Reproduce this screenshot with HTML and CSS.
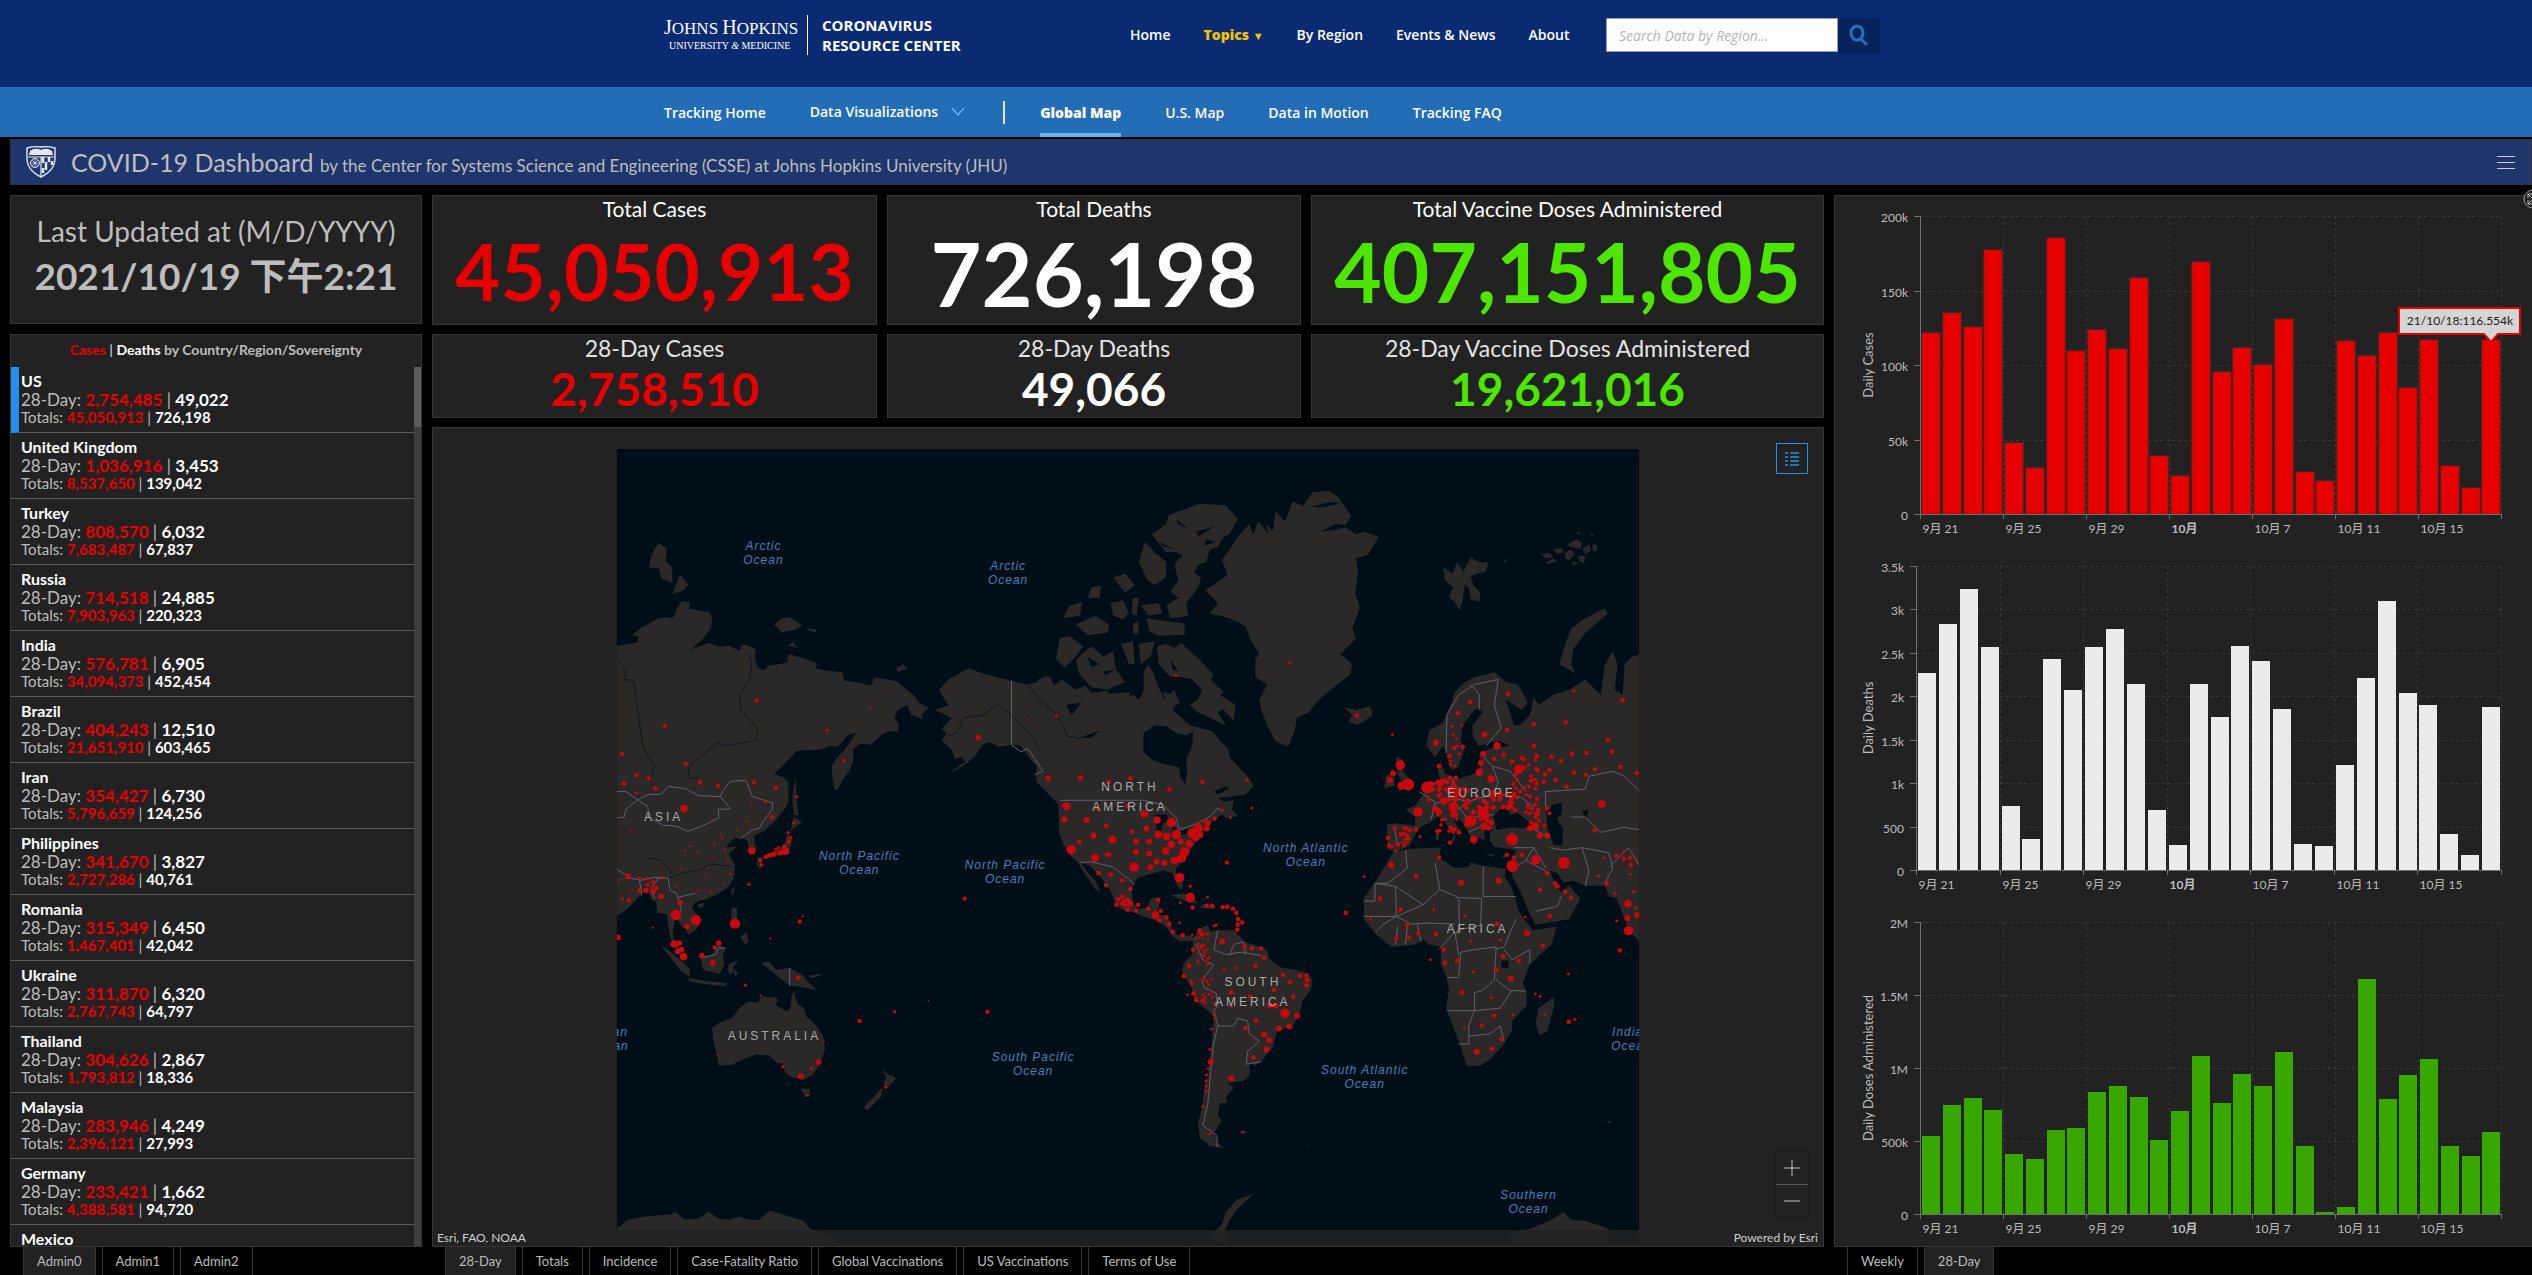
FILE: index.html
```html
<!DOCTYPE html>
<html lang="en">
<head>
<meta charset="utf-8">
<title>COVID-19 Map - Johns Hopkins Coronavirus Resource Center</title>
<link rel="stylesheet" href="styles.css">
</head>
<body>
<header class="site-header">
  <div class="wrap">
    <a class="brand" href="#">
      <span class="jhu"><span class="jhu-name"><b>J</b>OHNS <b>H</b>OPKINS</span><span class="jhu-sub">UNIVERSITY <i>&amp;</i> MEDICINE</span></span>
      <span class="crc">CORONAVIRUS<br>RESOURCE CENTER</span>
    </a>
    <nav class="main-nav">
      <a href="#">Home</a><a class="topics" href="#">Topics <small>▼</small></a><a href="#">By Region</a><a href="#">Events &amp; News</a><a href="#">About</a>
    </nav>
    <form class="search">
      <input type="text" aria-label="Search Data by Region" placeholder="Search Data by Region...">
      <button type="button" aria-label="Search"><svg width="20" height="24" viewBox="0 0 20 24"><ellipse cx="8" cy="9" rx="6" ry="7" fill="none" stroke="#2372ba" stroke-width="3"/><path d="M12 15l6 6" stroke="#2372ba" stroke-width="3"/></svg></button>
    </form>
  </div>
</header>
<div class="sub-header">
  <nav class="wrap sub-nav">
    <a href="#">Tracking Home</a>
    <a class="viz" href="#">Data Visualizations <svg width="14" height="10" viewBox="0 0 14 10"><path d="M1 1l6 7 6-7" fill="none" stroke="#6fb5f5" stroke-width="1.3"/></svg></a>
    <span class="sep"></span>
    <a class="active" href="#">Global Map</a><a href="#">U.S. Map</a><a href="#">Data in Motion</a><a href="#">Tracking FAQ</a>
  </nav>
</div>

<main class="dashboard">
  <div class="title-bar">
    <svg class="shield" width="32" height="34" viewBox="0 0 32 34"><path d="M2 3q7-2 14-1 7-1 14 1v12q-1 11-14 17Q3 26 2 15z" fill="#20386f" stroke="#e4e7ee" stroke-width="1.4"/><path d="M5 6q5-4 11-1 6-3 11 1l1 4H4z" fill="#e4e7ee"/><path d="M3 12h26M16 12v19" stroke="#e4e7ee" stroke-width="1.2"/><circle cx="10" cy="18" r="4.500" fill="none" stroke="#e4e7ee"/><path d="M6 18h8M10 14v8M7 15l6 6M13 15l-6 6" stroke="#e4e7ee" stroke-width=".7"/><path d="M18 12v6M21 17v8M24 12v5M27 16v4M18 23v5" stroke="#e4e7ee" stroke-width="2.500"/></svg>
    <h1>COVID-19 Dashboard <small>by the Center for Systems Science and Engineering (CSSE) at Johns Hopkins University (JHU)</small></h1>
    <button class="menu" type="button" aria-label="Menu"><span></span><span></span><span></span></button>
  </div>
  <div class="columns">
    <section class="col left">
      <div class="panel updated"><p>Last Updated at (M/D/YYYY)</p><p class="date">2021/10/19 下午2:21</p></div>
      <div class="panel list">
        <h2><span class="red">Cases</span> | <span class="white">Deaths</span> by Country/Region/Sovereignty</h2>
        <div class="scroller"><ul id="countries"></ul><div class="track"><div class="thumb"></div></div></div>
      </div>
      <nav class="tabs"><button class="on">Admin0</button><button>Admin1</button><button>Admin2</button></nav>
    </section>

    <section class="col middle">
      <div class="stats totals">
        <div class="panel"><h3>Total Cases</h3><p class="red big">45,050,913</p></div>
        <div class="panel"><h3>Total Deaths</h3><p class="white huge">726,198</p></div>
        <div class="panel"><h3>Total Vaccine Doses Administered</h3><p class="green large">407,151,805</p></div>
      </div>
      <div class="stats recent">
        <div class="panel"><h3>28-Day Cases</h3><p class="red">2,758,510</p></div>
        <div class="panel"><h3>28-Day Deaths</h3><p class="white">49,066</p></div>
        <div class="panel"><h3>28-Day Vaccine Doses Administered</h3><p class="green">19,621,016</p></div>
      </div>
      <div class="panel map">
        <svg class="world" viewBox="433 428 1390 819">
          <defs><clipPath id="frame"><path d="M616 449h1024v798H616z"/></clipPath></defs>
          <g clip-path="url(#frame)">
            <path class="sea" d="M616 449h1024v800H616z"/>
            <g class="land" transform="translate(600 440) scale(.338 .5102)">
              <path d="M40 405L108 398 112 385 92 384 120 368 150 358 170 350 190 348 214 350 226 330 240 316 264 318 262 330 300 336 322 338 330 350 328 368 300 392 268 411 320 398 350 406 380 404 412 414 418 402 440 404 460 412 456 430 466 448 484 452 500 442 530 440 552 436 556 420 600 428 640 438 636 448 660 452 716 456 722 472 762 476 800 482 812 466 850 470 880 474 910 492 930 502 940 514 972 526 950 540 955 547 920 540 908 520 880 530 870 545 884 560 880 572 850 572 830 580 800 598 770 596 748 606 748 632 738 648 720 664 704 684 694 688 686 660 684 640 700 624 720 610 740 592 756 574 730 580 716 592 700 602 680 600 650 608 582 610 550 632 514 656 540 662 556 672 556 712 540 728 516 748 490 764 478 770 456 776 456 790 462 800 450 812 438 808 436 790 426 782 412 784 400 780 384 788 370 800 404 798 380 812 398 834 396 856 380 876 350 890 330 896 312 902 290 904 276 910 270 918 290 936 296 948 280 962 260 972 252 960 240 956 232 944 220 940 214 964 216 980 224 985 236 1000 240 1010 228 1006 216 990 206 975 202 960 196 930 188 930 168 928 164 906 150 902 140 884 120 890 108 900 80 920 40 937z"/>
              <path d="M150 225L170 202 196 212 194 238 212 250 212 280 180 272 172 252 142 250zM212 302L236 264 260 284 244 296zM515 362L535 350 560 348 598 364 578 372 536 378zM606 370L640 372 636 378zM556 404L570 396 582 408zM876 448L896 440 908 448 880 456z"/>
              <path d="M576 660L580 700 586 738 572 735 568 705zM562 770L572 740 598 750 570 762zM556 768L566 788 556 812 530 815 504 820 488 820 470 822 500 810 520 808 545 790zM464 824L480 824 480 834 472 842 462 834zM386 890L390 878 398 880 390 894zM286 912L306 908 304 916 292 918z"/>
              <path d="M388 918L404 918 404 940 414 952 398 954 386 944zM414 975L432 965 438 985 428 990zM176 990L210 1006 246 1026 264 1038 264 1054 240 1044 210 1018zM260 1056L320 1062 372 1066 372 1072 310 1068 262 1062zM296 1016L330 1010 344 990 372 996 362 1012 366 1030 352 1048 304 1040zM380 1028L410 1020 390 1036 408 1046 400 1052 390 1042 384 1052 376 1040zM474 1026L500 1024 520 1040 560 1036 600 1050 612 1062 642 1080 600 1074 560 1070 520 1050zM610 1052L650 1048 654 1050 630 1056z"/>
              <path d="M330 1154L350 1144 390 1134 412 1114 436 1102 466 1104 476 1092 524 1094 520 1110 554 1122 562 1112 566 1088 572 1084 584 1108 600 1112 610 1132 634 1146 660 1170 664 1196 652 1222 628 1246 600 1256 564 1250 546 1240 540 1224 522 1222 500 1208 460 1206 420 1216 390 1226 350 1228 346 1210 334 1180zM592 1272L620 1274 620 1288 606 1290zM834 1232L850 1244 876 1252 848 1272 838 1264 846 1252zM836 1270L830 1290 790 1316 778 1310 810 1288z"/>
              <path d="M1003 490L1030 470 1070 455 1090 448 1130 458 1200 470 1260 480 1290 476 1320 462 1340 480 1400 490 1450 500 1568 495 1568 700 1380 712 1360 706 1340 690 1322 684 1300 665 1290 640 1260 615 1245 600 1220 598 1180 602 1150 592 1130 600 1110 620 1090 632 1060 645 1020 658 980 671 1030 655 1060 640 1080 632 1070 622 1050 625 1040 608 1010 590 1025 575 1010 568 1040 545 990 530 1030 520 1010 500z"/>
              <path d="M48 1548L80 1530 130 1524 210 1520 220 1514 250 1530 290 1528 320 1514 350 1528 380 1530 410 1524 440 1530 470 1530 500 1512 540 1520 600 1532 620 1548 680 1560 720 1580 48 1580z"/>
            </g>
            <g class="land" transform="translate(1040 440) scale(.3954 .5102)">
              <path d="M-5 470L25 464 35 482 55 470 90 490 115 482 130 496 170 492 180 506 210 508 235 500 250 510 262 492 262 455 275 440 285 455 300 485 315 510 340 490 350 515 335 530 380 560 430 570 438 572 455 590 476 606 480 622 500 640 530 665 540 680 520 695 480 700 450 702 465 710 490 706 486 725 500 738 470 742 462 735 440 745 430 755 415 770 400 785 385 800 370 820 345 840 343 850 362 870 358 884 345 872 335 850 310 845 280 852 250 858 238 868 232 885 235 905 245 920 270 918 280 900 305 897 300 920 292 932 320 932 332 952 336 965 355 974 385 972 392 984 378 982 355 984 336 975 320 956 300 945 272 938 240 928 215 924 190 912 185 895 170 875 150 855 125 835 105 830 122 850 140 865 154 887 138 880 110 848 95 828 75 815 60 795 48 770 48 740 46 715 30 702 -10 670z"/>
              <path d="M40 430L50 388 75 385 100 400 110 405 85 430 62 447zM90 432L120 410 130 405 160 425 185 415 192 450 215 475 170 490 130 485 100 460zM205 400L235 395 240 440 225 440zM250 400L290 395 280 425 255 440zM58 350L75 325 108 318 100 345zM90 362L140 345 175 362 172 378 120 383zM120 310L130 290 155 285 150 310zM185 270L215 262 240 285 215 300zM178 320L210 315 225 340 210 352 185 345zM235 310L250 310 245 345 232 340zM235 360L250 355 248 382 235 380zM270 350L320 355 366 360 366 382 300 384 276 375zM255 325L300 320 310 340 275 345z"/>
              <path d="M250 240L265 200 290 220 320 240 318 270 290 285 272 275zM283 185L320 165 325 148 350 140 372 135 400 125 470 128 500 155 480 185 465 190 450 210 430 215 420 240 400 245 390 260 408 270 400 290 370 320 375 345 330 350 320 325 350 310 330 298 350 275 340 245 360 225 318 220z"/>
              <path d="M296 405L320 400 340 408 358 398 380 415 400 428 420 445 440 460 432 470 465 495 455 500 495 520 490 550 462 528 450 535 470 560 430 545 400 535 380 520 400 510 410 490 385 470 360 465 330 465 300 440zM310 495L340 500 355 515 330 525z"/>
              <path d="M500 190L530 165 540 185 552 160 580 185 570 165 590 178 596 140 620 160 640 120 665 130 690 102 730 100 755 112 788 150 770 170 800 185 820 180 858 190 830 225 800 232 805 260 798 300 810 330 790 370 800 390 760 420 790 440 785 460 720 500 700 515 680 535 650 545 645 570 628 602 595 590 575 560 560 530 555 510 575 480 545 465 545 430 555 420 535 395 520 365 480 350 430 340 450 320 418 295 475 265 460 235 480 215z"/>
              <path d="M770 525L800 530 835 522 842 540 805 560 780 552 790 540zM1020 250L1045 262 1055 240 1072 258 1090 230 1112 240 1135 240 1128 258 1108 262 1090 268 1098 285 1115 300 1112 318 1090 312 1085 290 1075 285 1070 315 1062 335 1050 318 1035 308 1045 290 1025 275zM1315 440L1330 400 1345 370 1380 350 1430 330 1438 340 1380 380 1350 410 1345 440 1355 458z"/>
              <path d="M1268 223L1290 222 1300 230 1280 232zM1282 240L1300 232 1308 238 1285 244zM1302 215L1320 212 1325 220 1308 224zM1328 222L1345 215 1355 224 1340 236 1330 232zM1335 205L1360 195 1372 202 1368 214 1345 210zM1356 182L1368 180 1366 186zM1374 212L1392 205 1395 218 1380 224zM1398 204L1410 206 1408 220 1400 216zM1362 226L1380 228 1378 242 1366 238zM1348 238L1364 242 1350 246zM1390 184L1400 184 1400 190zM1172 236L1182 234 1178 242zM1436 1336L1450 1338 1438 1342zM672 1382L680 1386 678 1388z"/>
              <path d="M388 978L405 958 425 952 430 965 450 962 490 962 520 985 575 1000 580 1018 610 1035 650 1040 680 1048 690 1060 685 1080 665 1100 655 1130 640 1150 600 1160 590 1190 560 1220 545 1228 530 1222 532 1245 515 1258 475 1262 490 1272 470 1290 475 1300 455 1302 450 1325 460 1335 440 1360 448 1376 465 1390 430 1385 405 1370 400 1340 410 1310 416 1270 425 1250 435 1180 440 1130 400 1105 380 1070 360 1045 362 1028 385 1010zM330 893L365 890 402 908 378 908zM405 918L412 910 445 915 440 920zM505 1358L524 1356 520 1362z"/>
              <path d="M895 808L940 802 1015 800 1010 820 1050 840 1085 838 1090 828 1110 834 1180 842 1176 855 1195 880 1210 920 1225 940 1248 962 1308 955 1295 990 1265 1010 1240 1030 1222 1065 1232 1085 1232 1110 1195 1140 1195 1160 1170 1190 1140 1215 1115 1228 1080 1228 1065 1190 1045 1150 1028 1115 1035 1080 1030 1055 1015 1030 1015 995 985 990 970 980 950 990 890 995 850 970 820 940 820 900 850 865 870 840zM1300 1093L1302 1108 1285 1160 1265 1168 1255 1145 1262 1115z"/>
              <path d="M878 755L900 752 950 757 950 740 925 725 950 718 960 705 978 690 1000 672 1012 665 1005 640 1015 632 1025 655 1060 665 1100 655 1115 640 1112 615 1140 605 1190 600 1160 590 1110 600 1095 580 1095 560 1120 535 1112 525 1100 530 1070 560 1065 590 1075 605 1060 640 1045 648 1035 640 1030 615 1020 600 1000 622 978 600 985 570 1020 555 1040 520 1050 495 1075 475 1100 465 1130 460 1150 455 1180 475 1210 480 1235 515 1220 530 1180 510 1200 560 1215 560 1240 540 1250 505 1262 520 1300 500 1340 490 1380 470 1420 500 1430 440 1450 415 1462 440 1455 490 1475 500 1480 440 1500 425 1520 420 1520 985 1500 970 1490 965 1480 940 1460 900 1440 895 1430 875 1380 875 1350 865 1325 868 1310 850 1290 845 1310 880 1322 888 1340 875 1368 900 1340 940 1255 952 1240 930 1215 885 1195 855 1198 820 1205 805 1180 802 1150 798 1138 785 1140 768 1150 765 1190 760 1165 765 1125 765 1125 785 1110 780 1100 797 1088 775 1068 748 1048 735 1042 728 1050 750 1072 775 1052 768 1050 785 1035 795 1048 775 1020 745 1005 738 990 750 965 758 945 780 935 797 900 808 880 803zM902 620L920 628 918 650 930 660 945 680 905 690 918 672 905 655zM875 660L895 650 898 678 872 684zM1002 765L1012 765 1010 785 1002 785zM1125 812L1150 814 1145 818zM1168 818L1182 812 1178 820z"/>
              <path d="M1240 1548L1290 1532 1325 1515 1345 1530 1380 1532 1440 1548 1440 1580 1190 1580 1195 1555zM420 1568L460 1540 470 1515 500 1490 540 1480 500 1508 480 1530 468 1550 480 1580z"/>
              <g class="water"><path d="M262 575L290 560 320 562 345 575 370 580 388 572 385 600 370 625 372 655 368 676 355 662 352 642 310 635 285 628 262 612zM1148 738L1170 720 1185 728 1192 736 1208 732 1225 742 1252 758 1220 762 1195 760 1155 765zM1282 730L1300 715 1322 712 1320 735 1308 742 1325 765 1322 795 1300 795 1285 762zM1168 1022H1186V1036H1168zM290 735L320 735 330 750 310 752 305 780 298 780zM335 752L350 770 375 762 372 772 335 780zM440 690L470 680 480 684 450 695zM100 585L150 570 130 585zM65 520L105 515 80 540zM1372 730L1388 725 1384 745z"/>
              <path d="M285 222L345 220 360 232 330 232zM300 200L345 215 310 208zM395 180L440 170 400 190zM345 155L375 175 350 165zM420 195L445 200 415 208zM710 180L750 165 790 168 750 176zM685 132L730 122 760 124 720 132zM120 425L150 440 130 445zM160 455L190 450 165 462zM330 430L350 455 335 450z"/></g>
            </g>
            <g class="rivers" transform="translate(600 440) scale(.338 .5102)"><path d="M50 430L75 455 72 470 98 472 112 540 125 600 160 640 145 670 165 685M440 420L448 440 440 470 412 500 415 530 466 565 460 590 370 600 345 595 270 635 258 650 265 664 290 662M1030 580L1055 575 1075 545 1130 540 1178 518 1215 540 1240 555 1280 580 1300 610M1265 480L1300 510 1345 535 1370 560 1380 580 1420 586M200 860L240 850 290 845 330 832 395 838M140 820L180 825 210 850"/></g>
            <g class="borders" transform="translate(600 440) scale(.338 .5102)"><path d="M47 690L75 690 110 706 140 696 180 695 200 680 250 684 290 698 355 700 360 690 384 670 430 668 450 700 510 712 508 725 480 750 470 762 450 765 418 780M110 706L140 720 142 740 185 756 225 758 258 768 300 758 350 742 348 725 384 724 355 700M110 706L75 725 70 740 47 742M47 842L90 860 120 864 160 858 190 860M115 862L122 896M160 900L150 880 170 860 200 860 206 884 225 890 240 920 226 935M225 898L280 890M300 1016L340 1010 350 996 368 998M560 1036V1072M1217 472V598L1245 612 1265 605 1300 640 1310 650 1285 657"/></g>
            <g class="borders" transform="translate(1040 440) scale(.3954 .5102)"><path d="M50 707H260L310 715 345 742 352 765 400 752 432 738 450 722 462 730M100 829L130 828 185 838 240 872M450 962L440 1000 470 1010 510 1005 560 1012M395 990L412 1020 440 1030 410 1060 415 1075 445 1085 450 1110 440 1120 450 1150 490 1150 500 1135 525 1140 530 1165 555 1180 525 1200 522 1225 560 1220M450 1150L438 1190 432 1240 425 1300 412 1345 448 1365 448 1388M480 1012L490 990 515 985 520 1010M820 905H848V870H880L930 840 925 805M848 870L900 876 970 912 1012 882 1000 830M1012 882L1060 898 1062 958 1050 970 1070 960 1115 952 1118 900 1062 898M1122 838V896H1205M900 876L902 935H820M902 935L870 950 850 965M902 935L970 912M902 935L940 950 980 948 1050 950M1030 1055L1060 1055 1065 1005 1100 1000 1155 995 1150 1060 1120 1080 1100 1085 1100 1120 1030 1120M1150 1000L1175 995 1205 940M1175 1000L1195 1020 1240 1000 1240 1028M1155 1060L1190 1080 1230 1082M1195 1080L1165 1115 1100 1120 1085 1150 1086 1185 1060 1185M1086 1170L1140 1165 1165 1150 1175 1180M900 990L905 955M925 990L930 955M965 985L955 950M1010 1000L1050 965 1060 1010M1200 840L1230 825 1250 800 1200 800M1230 825L1290 850M1255 925L1310 915 1320 895M1250 800L1280 840M1290 800L1325 805 1372 800 1390 845 1380 875M1372 800L1440 810 1450 840 1430 870M1280 725L1280 690 1380 685 1390 660 1450 650 1480 660 1520 690M1346 740H1380L1420 770 1480 760 1517 765M1440 840L1490 800 1517 835M1028 615L1030 540 1060 500 1100 480 1160 470 1150 520 1168 565 1130 600M1090 480L1112 500 1112 530M1045 665L1040 700 1080 710 1150 695 1215 700 1250 720M960 690L1000 710 990 745M1000 715L1040 700M1080 710L1060 725 1040 720M1100 740L1150 735M1085 770L1125 755M1115 615L1145 640 1160 670 1150 695M1145 640L1190 650 1230 690M905 795L898 765M1240 760L1290 780M1040 700L1075 735 1090 760"/></g>
            <g id="dots"></g>
            <g class="oceans">
              <text x="763" y="550">Arctic<tspan x="763" dy="14">Ocean</tspan></text>
              <text x="1008" y="570">Arctic<tspan x="1008" dy="14">Ocean</tspan></text>
              <text x="859" y="861">North Pacific<tspan x="859" dy="14">Ocean</tspan></text>
              <text x="1005" y="870">North Pacific<tspan x="1005" dy="14">Ocean</tspan></text>
              <text x="1033" y="1062">South Pacific<tspan x="1033" dy="14">Ocean</tspan></text>
              <text x="608" y="1037">Indian<tspan x="608" dy="14">Ocean</tspan></text>
              <text x="1306" y="853">North Atlantic<tspan x="1306" dy="14">Ocean</tspan></text>
              <text x="1365" y="1075">South Atlantic<tspan x="1365" dy="14">Ocean</tspan></text>
              <text x="1632" y="1037">Indian<tspan x="1632" dy="14">Ocean</tspan></text>
              <text x="1529" y="1200">Southern<tspan x="1529" dy="14">Ocean</tspan></text>
            </g>
            <g class="continents">
              <text x="663" y="821">ASIA</text><text x="774" y="1041">AUSTRALIA</text>
              <text x="1130" y="791">NORTH<tspan x="1130" dy="20">AMERICA</tspan></text>
              <text x="1253" y="987">SOUTH<tspan x="1253" dy="20">AMERICA</tspan></text>
              <text x="1482" y="797">EUROPE</text><text x="1478" y="934">AFRICA</text>
            </g>
          </g>
        </svg>
        <button class="legend" type="button" aria-label="Legend"><svg width="16" height="18" viewBox="0 0 16 18"><path d="M6 3h9M6 7h9M6 11h9M6 15h9M1 3h3M1 7h3M1 11h3M1 15h3" stroke="#2490eb" stroke-width="1.500"/></svg></button>
        <div class="zoom">
          <button type="button" aria-label="Zoom in"><svg width="16" height="16" viewBox="0 0 16 16"><path d="M0 8h16M8 0v16" stroke="#c8c8c8"/></svg></button>
          <button type="button" aria-label="Zoom out"><svg width="16" height="16" viewBox="0 0 16 16"><path d="M0 8h16" stroke="#c8c8c8"/></svg></button>
        </div>
        <div class="credits"><span>Esri, FAO, NOAA</span><span>Powered by Esri</span></div>
      </div>
      <nav class="tabs"><button class="on">28-Day</button><button>Totals</button><button>Incidence</button><button>Case-Fatality Ratio</button><button>Global Vaccinations</button><button>US Vaccinations</button><button>Terms of Use</button></nav>
    </section>

    <section class="col right">
      <div class="panel charts" id="charts"></div>
      <nav class="tabs"><button>Weekly</button><button class="on">28-Day</button></nav>
      <svg class="expand" width="20" height="20" viewBox="0 0 20 20"><circle cx="10" cy="10" r="9" fill="#222" stroke="#999"/><path d="M5 9V5h4M5 5l4 4M5 11v4h4M5 15l4-4" fill="none" stroke="#bbb"/></svg>
    </section>
  </div>
</main>
<script src="script.js"></script>
</body>
</html>
```
FILE: styles.css
```css
* { box-sizing: border-box; }
body { margin: 0; height: 100vh; display: flex; flex-direction: column; overflow: hidden; background: #000; color: #bdbdbd; font-family: Lato, "Noto Sans CJK SC", sans-serif; }
a { color: #fff; text-decoration: none; }
h1, h2, h3, p, ul { margin: 0; padding: 0; font-weight: 400; }
button { border: 0; padding: 0; background: none; color: inherit; font: inherit; }
svg { display: block; }

.red { color: #e60000; }
.white { color: #fff; }
.green { color: #4ce600; }

/* Site header */
.site-header { flex: none; height: 87px; background: #0a2b72; }
.wrap { display: flex; width: 100%; max-width: 1228px; margin: 0 auto; padding-left: 12px; font-family: "Open Sans", sans-serif; font-size: 15px; font-weight: 600; }
.brand { display: flex; width: 466px; padding-top: 15px; }
.jhu { display: flex; flex-direction: column; width: 144px; height: 40px; padding-top: 3px; border-right: 1px solid #fff; font-family: "Liberation Serif", serif; font-weight: 400; line-height: 18px; }
.jhu-name { font-size: 17px; }
.jhu-name b { font-size: 20px; font-weight: 400; }
.jhu-sub { padding: 1px 0 0 5px; font-size: 10px; line-height: 14px; }
.crc { padding-left: 14px; font-size: 15px; font-weight: 700; line-height: 20px; }
.main-nav { display: flex; gap: 33px; width: 476px; padding-top: 24px; line-height: 22px; white-space: nowrap; font-size: 14px; }
.main-nav .topics { color: #f1c400; font-weight: 800; }
.main-nav small { font-size: 11px; }
.search { display: flex; align-items: flex-start; padding-top: 18px; }
.search input { width: 232px; height: 34px; padding: 0 12px; border: 1px solid #999; border-radius: 0; background: #fff; font: italic 14px "Open Sans", sans-serif; }
.search input::placeholder { color: #b5b5b5; }
.search button { display: grid; place-items: center; width: 42px; height: 36px; background: #06225b; }
.sub-header { flex: none; height: 50px; background: #226db6; }
.sub-nav { gap: 44px; height: 50px; line-height: 52px; font-size: 14px; }
.sub-nav .viz { display: flex; align-items: center; gap: 13px; margin-right: -6px; }
.sub-nav .sep { width: 2px; height: 23px; margin: 14px -9px 0 0; background: #dce8f4; }
.sub-nav .active { border-bottom: 4px solid #69b3f7; font-weight: 800; }

/* Dashboard frame */
.dashboard { flex: 1; display: flex; flex-direction: column; gap: 10px; min-height: 0; padding: 2px 0 0 10px; }
.title-bar { flex: none; display: flex; align-items: center; height: 46px; padding: 0 16px 0 14px; background: #1e366c; border: 1px solid #333; }
.title-bar h1 { flex: 1; padding-left: 14px; font-size: 25px; }
.title-bar small { font-size: 17px; }
.menu { display: grid; gap: 5px; }
.menu span { width: 18px; height: 1px; background: #ccc; }
.columns { flex: 1; display: grid; grid-template-columns: 412fr 1392fr 698fr; gap: 10px; min-height: 0; }
.col { display: flex; flex-direction: column; gap: 10px; min-width: 0; min-height: 0; position: relative; }
.panel { background: #222; border: 1px solid #363636; }
.tabs { flex: none; display: flex; gap: 6px; height: 28px; margin-top: -10px; padding-left: 13px; font-size: 13px; }
.tabs button { padding: 0 13px; border: solid #363636; border-width: 0 1px; white-space: nowrap; }
.tabs .on { background: #222; }

/* Left column */
.updated { flex: none; height: 129px; padding-top: 16px; font-size: 28px; line-height: 38px; text-align: center; }
.updated .date { padding-top: 4px; font-size: 37px; font-weight: 700; line-height: 44px; white-space: nowrap; }
.list { flex: 1; display: flex; flex-direction: column; min-height: 0; }
.list h2 { flex: none; height: 32px; font-size: 14px; font-weight: 700; line-height: 30px; text-align: center; }
.scroller { flex: 1; display: flex; min-height: 0; overflow: hidden; }
.scroller ul { flex: 1; list-style: none; }
.scroller li { height: 66px; padding: 4px 0 0 10px; border-bottom: 1px solid #5a5a5a; color: #fff; font-size: 16px; line-height: 19px; }
.scroller li:first-child { padding-left: 2px; border-left: 8px solid #2490eb; }
.scroller p { color: #bdbdbd; font-size: 17px; }
.scroller p.total { font-size: 15px; line-height: 17px; }
.track { width: 7px; background: #3e3e3e; }
.thumb { height: 60px; background: #5c5c5c; }

/* Middle column */
.stats { flex: none; display: grid; grid-template-columns: 445fr 414fr 513fr; gap: 10px; height: 129px; text-align: center; }
.stats h3 { color: #fff; font-size: 21px; line-height: 26px; }
.stats .big { font-size: 78px; font-weight: 700; line-height: 98px; }
.stats .huge { font-size: 88px; font-weight: 700; line-height: 102px; }
.stats .large { font-size: 82px; font-weight: 700; line-height: 98px; }
.recent { height: 83px; }
.recent h3 { color: #e4e4e4; font-size: 23px; }
.recent p { font-size: 46px; font-weight: 700; line-height: 56px; }
.map { flex: 1; min-height: 0; position: relative; overflow: hidden; }
.world { width: 100%; height: 100%; }
.sea, .water { fill: #000e18; }
.land { fill: #2a2928; }
.borders, .rivers { fill: none; stroke: #665d70; stroke-width: 1; }
.borders path, .rivers path { vector-effect: non-scaling-stroke; }
.rivers { stroke: #0d1620; }
.world .dot { fill: #c8080c; }
.oceans { fill: #4a80b8; font: italic 12px "Liberation Sans", sans-serif; letter-spacing: 1px; text-anchor: middle; }
.continents { fill: #aaa; font: 12px "Liberation Sans", sans-serif; letter-spacing: 3px; text-anchor: middle; }
.legend { position: absolute; top: 15px; right: 15px; display: grid; place-items: center; width: 32px; height: 31px; border: 1px solid #2490eb; }
.zoom { position: absolute; right: 15px; bottom: 30px; width: 32px; box-shadow: 0 0 3px #111; }
.zoom button { display: grid; place-items: center; width: 32px; height: 32px; }
.zoom button + button { border-top: 1px solid #555; }
.credits { position: absolute; inset: auto 0 0; display: flex; justify-content: space-between; padding: 0 5px 0 4px; background: rgba(34, 34, 34, .85); color: #d0d0d0; font-size: 12px; line-height: 16px; }

/* Right column */
.charts { flex: 1; min-height: 0; border-right: 0; overflow: hidden; }
.charts svg { width: 100%; }
.charts text { fill: #bdbdbd; font-size: 12px; }
.charts .axis-name { font-size: 13px; text-anchor: middle; }
.charts .value { text-anchor: end; }
.charts .month { font-weight: 700; }
.charts .grid { stroke: #393939; stroke-dasharray: 3 3; }
.charts .axis { stroke: #707070; fill: none; }
.charts .tip { fill: #222; font-size: 12px; text-anchor: middle; }
.expand { position: absolute; top: -6px; right: -11px; }
```
FILE: script.js
```js
const countries = [
  ["US", "2,754,485", "49,022", "45,050,913", "726,198"],
  ["United Kingdom", "1,036,916", "3,453", "8,537,650", "139,042"],
  ["Turkey", "808,570", "6,032", "7,683,487", "67,837"],
  ["Russia", "714,518", "24,885", "7,903,963", "220,323"],
  ["India", "576,781", "6,905", "34,094,373", "452,454"],
  ["Brazil", "404,243", "12,510", "21,651,910", "603,465"],
  ["Iran", "354,427", "6,730", "5,796,659", "124,256"],
  ["Philippines", "341,670", "3,827", "2,727,286", "40,761"],
  ["Romania", "315,349", "6,450", "1,467,401", "42,042"],
  ["Ukraine", "311,870", "6,320", "2,767,743", "64,797"],
  ["Thailand", "304,626", "2,867", "1,793,812", "18,336"],
  ["Malaysia", "283,946", "4,249", "2,396,121", "27,993"],
  ["Germany", "233,421", "1,662", "4,388,581", "94,720"],
  ["Mexico"]
];
document.getElementById("countries").innerHTML = countries.map(([name, c, d, tc, td]) =>
  `<li><b>${name}</b>` + (c ? `<p>28-Day: <b class="red">${c}</b> | <b class="white">${d}</b></p>
  <p class="total">Totals: <b class="red">${tc}</b> | <b class="white">${td}</b></p>` : "") + "</li>").join("");

// Case markers: two map sheets, each a list of [radius, x, y, x, y, ...]
const sheets = [
  { x: 600, sx: .338, groups: [
    [5.2, 223, 932, 398, 949, 282, 942],
    [3.8, 247, 723, 448, 806, 1394, 804, 1380, 719, 1516, 784, 1465, 820, 246, 1014, 218, 989, 547, 807],
    [2.8, 1119, 584, 134, 884, 156, 886, 179, 896, 81, 857, 235, 908, 256, 955, 228, 1004, 233, 987, 240, 1000, 350, 987, 300, 1012, 332, 1026, 593, 1249, 646, 1221, 512, 813, 532, 810, 1374, 744, 1439, 746, 1460, 776, 52, 976, 1421, 663, 1326, 664],
    [2.2, 190, 561, 252, 635, 294, 672, 454, 672, 519, 682, 507, 740, 347, 678, 63, 616, 69, 674, 107, 658, 143, 664, 162, 684, 462, 512, 114, 884, 140, 873, 155, 868, 165, 878, 84, 904, 500, 815, 490, 818, 472, 824, 545, 798, 558, 788, 1078, 900, 767, 1140, 1146, 1122, 590, 945, 584, 1055, 1418, 788, 1498, 757, 1507, 814, 338, 996],
    [1.6, 670, 570, 720, 629, 489, 710, 572, 751, 581, 700, 439, 872, 64, 900, 871, 1122, 625, 1234, 540, 1230, 429, 1070, 844, 1270, 1350, 541, 555, 770, 564, 780, 526, 800, 519, 804, 477, 834, 105, 692, 115, 860, 136, 860, 184, 858],
    [1.1, 800, 525, 433, 749, 404, 766, 448, 716, 354, 774, 360, 782, 338, 792, 368, 802, 377, 826, 383, 852, 365, 870, 326, 886, 288, 884, 312, 860, 238, 842, 318, 840, 330, 820, 288, 810, 264, 797, 249, 806, 333, 745, 90, 769, 226, 877, 155, 957, 503, 978, 599, 935, 347, 1208, 661, 1180, 613, 1286, 474, 1090, 971, 1101, 1264, 549, 93, 884, 52, 864]
  ] },
  { x: 1040, sx: .3954, groups: [
    [6, 1195, 784, 1122, 732, 1090, 748, 1196, 836, 1326, 830, 932, 676, 980, 682],
    [4.8, 79, 804, 238, 838, 385, 772, 400, 762, 353, 859, 345, 774, 366, 808, 358, 820, 332, 751, 1212, 646, 1490, 963, 380, 898, 1046, 720, 957, 730, 620, 1125, 1255, 824, 912, 638],
    [3.8, 66, 719, 264, 734, 296, 746, 183, 784, 140, 820, 300, 774, 320, 778, 318, 806, 332, 794, 340, 826, 378, 792, 292, 932, 1157, 600, 1112, 652, 1142, 665, 1422, 714, 1488, 910, 1098, 784, 1124, 758, 1022, 708, 1048, 734, 914, 678, 1254, 758, 394, 780],
    [3, 117, 746, 135, 776, 61, 744, 295, 828, 315, 830, 279, 838, 277, 812, 243, 808, 243, 788, 277, 788, 269, 763, 422, 762, 406, 775, 356, 788, 390, 770, 425, 752, 889, 834, 1233, 968, 461, 984, 567, 1166, 580, 1178, 573, 1196, 651, 1130, 631, 1151, 605, 1155, 484, 1253, 432, 1220, 1106, 1200, 1192, 1057, 582, 1110, 596, 1110, 228, 910, 886, 668, 894, 654, 1002, 594, 1126, 578, 1116, 634, 1122, 616, 1083, 710, 1000, 724, 1192, 712, 1284, 776, 1265, 776, 1240, 762, 1512, 932, 1487, 938, 1161, 865, 1066, 869],
    [2.3, 21, 664, 102, 663, 411, 671, 327, 686, 174, 671, 229, 664, 145, 723, 222, 718, 167, 757, 233, 769, 99, 789, 169, 814, 442, 743, 419, 748, 148, 850, 179, 853, 208, 864, 229, 881, 167, 874, 198, 902, 208, 896, 212, 906, 222, 902, 216, 912, 194, 912, 208, 910, 248, 912, 222, 922, 243, 924, 274, 920, 299, 903, 305, 924, 302, 943, 320, 937, 327, 950, 336, 965, 361, 972, 386, 917, 422, 914, 436, 914, 462, 917, 474, 916, 488, 920, 497, 928, 501, 940, 500, 951, 512, 947, 499, 961, 404, 962, 410, 970, 408, 994, 388, 1000, 377, 1032, 364, 1052, 390, 1086, 395, 1100, 412, 1100, 518, 994, 537, 998, 560, 998, 567, 1016, 545, 1032, 615, 1050, 633, 1064, 592, 1079, 532, 1092, 484, 1084, 641, 1093, 674, 1070, 676, 1060, 658, 1052, 674, 1051, 547, 1140, 520, 1154, 540, 1212, 802, 540, 1058, 536, 1185, 498, 1089, 514, 1182, 569, 1250, 558, 1331, 554, 1475, 511, 1438, 588, 1250, 600, 1346, 616, 1384, 614, 1319, 630, 1295, 622, 1257, 620, 1470, 642, 1512, 654, 1448, 612, 1405, 646, 1352, 653, 1382, 657, 1305, 668, 1333, 680, 1290, 648, 1278, 656, 1260, 648, 1276, 671, 1258, 674, 1284, 722, 1258, 704, 1220, 624, 1195, 631, 1174, 618, 1149, 626, 1010, 640, 1070, 602, 1049, 604, 1036, 620, 1010, 820, 952, 857, 861, 900, 912, 922, 929, 952, 902, 978, 934, 976, 957, 968, 1002, 970, 1022, 1000, 1025, 1026, 1056, 1022, 1068, 1084, 1172, 1014, 1212, 1022, 1156, 1040, 1118, 1149, 1149, 1130, 1144, 1194, 1168, 1176, 1273, 992, 1157, 950, 1405, 766, 1266, 882, 1290, 934, 1344, 898, 1304, 870, 1310, 876, 1329, 886, 1284, 850, 1220, 814, 1200, 820, 1182, 814, 1435, 870, 1460, 816, 1478, 822, 1494, 820, 1496, 834, 1468, 1002, 1339, 1142, 774, 928, 473, 829, 881, 781, 884, 796, 906, 794, 912, 774, 898, 762, 936, 766, 952, 764, 932, 782, 1038, 790, 1006, 768, 1060, 770, 1048, 764],
    [1.5, 344, 462, 461, 726, 482, 741, 380, 876, 355, 908, 424, 897, 353, 948, 440, 954, 446, 952, 466, 1040, 494, 1036, 484, 1112, 442, 1106, 440, 1128, 442, 1134, 434, 1156, 430, 1196, 426, 1234, 421, 1246, 420, 1258, 420, 1268, 421, 1278, 412, 1308, 430, 1362, 513, 1358, 632, 437, 892, 578, 1352, 492, 1354, 1137, 1338, 1048, 1254, 1087, 1266, 1092, 1142, 1094, 1096, 1044, 1091, 984, 1166, 982, 1075, 934, 997, 922, 836, 940, 821, 857, 988, 1020, 1074, 1153, 1278, 1128, 1197, 1128, 1228, 936, 1414, 856, 1428, 820, 1456, 890, 1503, 886, 1508, 918, 1460, 944, 1494, 852, 1510, 824, 1480, 806, 1054, 586, 1044, 562, 1068, 560, 1046, 578, 1056, 600, 1040, 636, 1050, 640, 1062, 616, 1040, 630, 536, 722, 524, 668, 962, 778, 900, 806, 922, 770, 918, 790]
  ] }
];
const dots = [];
const mark = (s, r, x, y) => dots.push(`<circle class="dot" cx="${(s.x + x * s.sx).toFixed(1)}" cy="${(440 + y * .5102).toFixed(1)}" r="${r}"/>`);
for (const s of sheets)
  for (const [r, ...p] of s.groups)
    for (let i = 0; i < p.length; i += 2) mark(s, r, p[i], p[i + 1]);

// Dense clusters: [count, x from, x to, y from, y to, radius]
let seed = 7;
const rand = () => (seed = (seed * 16807) % 2147483647) / 2147483647;
for (const [n, x0, x1, y0, y1, r] of [
  [34, 985, 1060, 660, 710, 2.2], [24, 1060, 1200, 685, 725, 2.4], [34, 1190, 1262, 624, 730, 2], [12, 1075, 1150, 720, 765, 2.6],
  [14, 1005, 1055, 725, 770, 1.8], [12, 1230, 1290, 730, 765, 2], [30, 385, 430, 962, 1030, 1.2], [18, 370, 440, 1055, 1110, 1.4], [10, 885, 935, 755, 800, 1.7]])
  for (let i = 0; i < n; i++) mark(sheets[1], r, x0 + rand() * (x1 - x0), y0 + rand() * (y1 - y0));
document.getElementById("dots").innerHTML = dots.join("");

const charts = [
  { name: "Daily Cases", color: "#e60000", edge: "#8c1a1a", left: 85, top: 20, bottom: 318, height: 355, max: 200, ticks: ["0", "50k", "100k", "150k", "200k"],
    data: [121.3, 134.7, 125.5, 177.2, 47.7, 30.9, 185.2, 109.4, 123.5, 110.7, 158.4, 38.9, 25.5, 169.1, 95.3, 111.4, 100, 130.9, 28.2, 22.1, 116.1, 106, 121.5, 84.6, 116.8, 32.2, 17.4, 116.6] },
  { name: "Daily Deaths", color: "#ebebeb", edge: "none", left: 81, top: 15, bottom: 319, height: 355, max: 3500, ticks: ["0", "500", "1k", "1.5k", "2k", "2.5k", "3k", "3.5k"],
    data: [2273, 2837, 3239, 2572, 732, 353, 2434, 2078, 2572, 2779, 2147, 686, 284, 2147, 1756, 2584, 2411, 1859, 295, 272, 1204, 2216, 3101, 2043, 1894, 410, 169, 1882] },
  { name: "Daily Doses Administered", color: "#38a800", edge: "none", left: 85, top: 16, bottom: 308, height: 340, max: 2000, ticks: ["0", "500k", "1M", "1.5M", "2M"],
    data: [537, 749, 797, 715, 413, 379, 578, 591, 838, 879, 804, 509, 708, 1084, 763, 961, 879, 1112, 468, 16, 50, 1612, 790, 954, 1064, 468, 400, 564] }
];
const days = ["9月 21", "9月 25", "9月 29", "10月", "10月 7", "10月 11", "10月 15"];
const right = 666;
document.getElementById("charts").innerHTML = charts.map((c, n) => {
  const step = (right - c.left) / 28, h = c.bottom - c.top;
  let s = `<svg viewBox="0 0 697 ${c.height}"><text class="axis-name" transform="translate(38 ${(c.top + c.bottom) / 2}) rotate(-90)">${c.name}</text>`;
  c.ticks.forEach((t, i) => {
    const y = Math.round(c.bottom - h * i / (c.ticks.length - 1)) + .5;
    s += `<path class="grid" d="M${c.left} ${y}H${right}"/><path class="axis" d="M${c.left - 6} ${y}h6"/><text class="value" x="${c.left - 12}" y="${y + 5}">${t}</text>`;
  });
  for (let i = 0; i < 8; i++) {
    const x = Math.round(c.left + step * 4 * i) + .5;
    s += `<path class="grid" d="M${x} ${c.top}V${c.bottom}"/><path class="axis" d="M${x} ${c.bottom}v5"/>`;
    if (days[i]) s += `<text${i === 3 ? ' class="month"' : ""} x="${x + 2}" y="${c.bottom + 19}">${days[i]}</text>`;
  }
  c.data.forEach((v, i) => {
    const y = Math.round(c.bottom - h * v / c.max);
    s += `<rect x="${Math.round(c.left + step * i + 2)}" y="${y}" width="18" height="${c.bottom - y}" fill="${c.color}" stroke="${c.edge}"/>`;
  });
  s += `<path class="axis" d="M${c.left + .5} ${c.top}V${c.bottom + .5}H${right}"/>`;
  if (n === 0) s += '<path d="M564 112h121v26h-22l-7 8-7-8h-85z" fill="#d5d5d5" stroke="#e60000" stroke-width="2"/><text class="tip" x="625" y="129">21/10/18:116.554k</text>';
  return s + "</svg>";
}).join("");
```
